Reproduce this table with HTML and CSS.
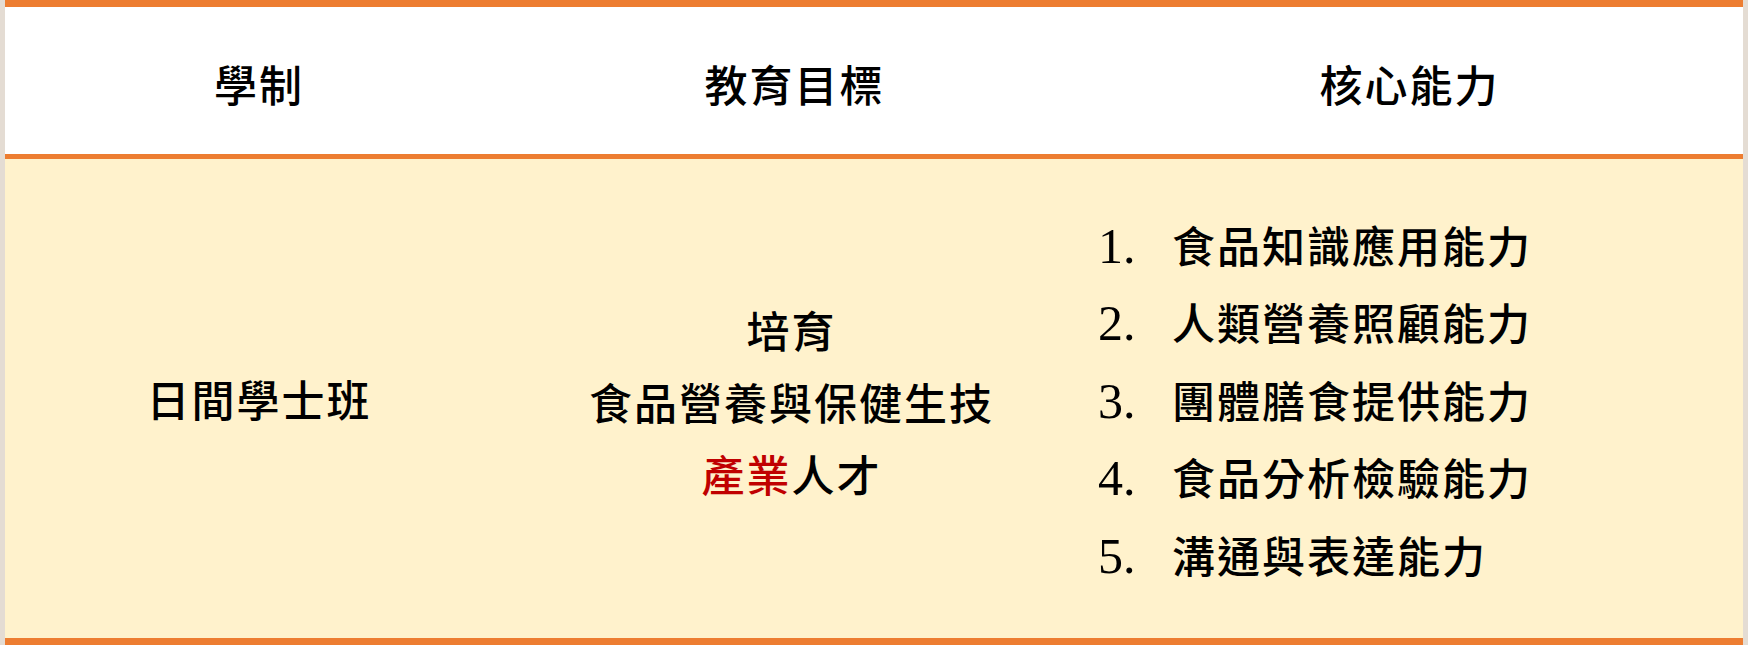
FILE: index.html
```html
<!DOCTYPE html>
<html lang="zh-Hant">
<head>
<meta charset="utf-8">
<title>學制 教育目標 核心能力</title>
<link rel="stylesheet" href="styles.css">
</head>
<body>
<div class="sheet">
  <div class="row head">
    <div class="cell">學制</div>
    <div class="cell">教育目標</div>
    <div class="cell">核心能力</div>
  </div>
  <div class="row main">
    <div class="cell">日間學士班</div>
    <div class="cell goal">
      <div>培育</div>
      <div>食品營養與保健生技</div>
      <div><span class="red">產業</span>人才</div>
    </div>
    <div class="cell abilities">
      <ol class="list">
        <li><span class="num">1.</span><span>食品知識應用能力</span></li>
        <li><span class="num">2.</span><span>人類營養照顧能力</span></li>
        <li><span class="num">3.</span><span>團體膳食提供能力</span></li>
        <li><span class="num">4.</span><span>食品分析檢驗能力</span></li>
        <li><span class="num">5.</span><span>溝通與表達能力</span></li>
      </ol>
    </div>
  </div>
</div>
</body>
</html>
```
FILE: styles.css
```css
html, body {
  margin: 0;
  padding: 0;
}
body {
  background: #e4dcd3;
  width: 1748px;
  height: 645px;
  overflow: hidden;
  font-family: "Noto Sans CJK TC", "Noto Sans CJK SC", sans-serif;
  color: #000;
}
.sheet {
  margin: 0 5px;
  width: 1738px;
}
.row {
  display: grid;
  grid-template-columns: 508px 563px 667px;
}
.head {
  background: #ffffff;
  border-top: 7px solid #ed7d31;
  border-bottom: 5px solid #ed7d31;
  height: 147px;
}
.main {
  background: #fff2cc;
  border-bottom: 7px solid #ed7d31;
  height: 479px;
}
.cell {
  display: flex;
  align-items: center;
  justify-content: center;
  font-size: 43px;
  font-weight: 500;
  letter-spacing: 2px;
  line-height: 1;
}
.head .cell {
  padding-top: 5px;
}
.goal {
  flex-direction: column;
  line-height: 72px;
  padding-top: 4px;
  padding-right: 6px;
}
.red {
  color: #c00000;
}
.abilities {
  justify-content: flex-start;
  padding-left: 22px;
}
.list {
  list-style: none;
  margin: 0;
  padding: 0;
  padding-top: 4px;
}
.list li {
  display: flex;
  align-items: baseline;
  line-height: 75.5px;
}
.num {
  font-family: "Liberation Serif", serif;
  font-size: 50px;
  font-weight: normal;
  letter-spacing: 0;
  width: 74px;
  flex: none;
}
```
